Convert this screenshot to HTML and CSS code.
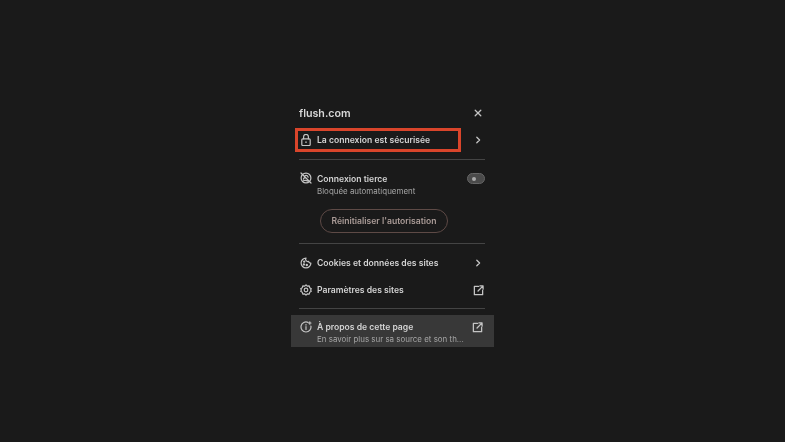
FILE: index.html
```html
<!DOCTYPE html>
<html lang="fr">
<head>
    <meta charset="UTF-8">
    <title>flush.com</title>
    <link rel="stylesheet" href="styles.css">
</head>
<body>
    <div class="panel">
        <div class="head">
            <span class="domain">flush.com</span>
            <svg class="ico-sm" viewBox="0 0 10 10"><path d="M1.5 1.5l7 7M8.500 1.500l-7 7"/></svg>
        </div>

        <div class="secure_row">
            <div class="secure_box">
                <svg class="ico" viewBox="0 0 12 12"><rect x="1.800" y="4.800" width="8.400" height="6.700" rx="1"/><path d="M3.600 4.800V2.800a2.400 2.400 0 0 1 4.800 0v2"/><path d="M5.600 8.100h.8"/></svg>
                <span class="label">La connexion est sécurisée</span>
            </div>
            <svg class="ico-sm" viewBox="0 0 10 10"><path d="M3.500 1.500L7 5 3.500 8.500"/></svg>
        </div>
        <div class="line line1"></div>

        <div class="third">
            <svg class="ico" viewBox="0 0 12 12"><circle cx="6" cy="6" r="4.900"/><path d="M1 1l10 10M3.400 7.200c.5-1.500 1.500-1.600 2.400-1.200M5.200 3.600c1-.3 2.400.1 3 1.600M3.400 8.800c1-.5 3-.4 4.600.4"/></svg>
            <div class="third_text">
                <span class="label">Connexion tierce</span>
                <span class="sub">Bloquée automatiquement</span>
            </div>
            <div class="toggle"><i></i></div>
        </div>
        <div class="reset_wrap"><a class="reset" href="#">Réinitialiser l'autorisation</a></div>
        <div class="line line2"></div>

        <div class="row row_cookies">
            <svg class="ico" viewBox="0 0 12 12"><path d="M6 1.100a4.900 4.900 0 1 0 4.900 4.900 2 2 0 0 1-2.300-1.600A2.200 2.200 0 0 1 6 1.100z"/><circle cx="4.200" cy="4.600" r=".6"/><circle cx="3.900" cy="7.400" r=".6"/><circle cx="6.800" cy="8" r=".6"/></svg>
            <span class="label">Cookies et données des sites</span>
            <svg class="ico-sm" viewBox="0 0 10 10"><path d="M3.500 1.500L7 5 3.500 8.500"/></svg>
        </div>
        <div class="row row_params">
            <svg class="ico" viewBox="0 0 12 12"><path d="M6 .8l1.300 1.400 1.900-.3.5 1.800 1.600 1L10.600 6l.7 1.300-1.600 1-.5 1.800-1.900-.3L6 11.200 4.700 9.800l-1.900.3-.5-1.800-1.600-1L1.400 6 .7 4.700l1.600-1 .5-1.800 1.900.3z"/><circle cx="6" cy="6" r="1.800"/></svg>
            <span class="label">Paramètres des sites</span>
            <svg class="ico-ext" viewBox="0 0 12 12"><path d="M6 1.500H1.500v9h9V6M7.500 1h3.500v3.500M11 1L5.500 6.500"/></svg>
        </div>
        <div class="line line3"></div>

        <div class="about">
            <svg class="ico" viewBox="0 0 12 12"><path d="M8 1.400A5 5 0 1 0 10.900 5"/><path d="M6 5.500v3M6 3.500v.6M9.800 .8v2.400M8.600 2h2.400"/></svg>
            <div class="about_text">
                <span class="label">À propos de cette page</span>
                <span class="sub">En savoir plus sur sa source et son th...</span>
            </div>
            <svg class="ico-ext" viewBox="0 0 12 12"><path d="M6 1.500H1.500v9h9V6M7.500 1h3.500v3.500M11 1L5.500 6.500"/></svg>
        </div>
    </div>
</body>
</html>
```

FILE: styles.css
```css
* { margin: 0; padding: 0; box-sizing: border-box; }

html, body { height: 100%; }

body {
    background-color: #1a1a1a;
    font-family: "Inter", "Liberation Sans", sans-serif;
    color: #d6d6d6;
    display: flex;
    justify-content: center;
    align-items: flex-start;
    padding-top: 103px;
}

svg { fill: none; stroke: #c4c4c4; stroke-linecap: round; stroke-linejoin: round; flex: none; }

.panel { width: 203px; display: flex; flex-direction: column; filter: blur(.45px); }

.ico { width: 12px; height: 12px; stroke-width: 1.200; }
.ico-sm { width: 8px; height: 8px; stroke-width: 1.6; }
.ico-ext { width: 11px; height: 11px; stroke-width: 1.400; }

.label { font-size: 8.600px; font-weight: 600; color: #d4d4d4; white-space: nowrap; }
.sub { font-size: 7.950px; color: #a6a6a6; white-space: nowrap; }

.head {
    height: 20px;
    padding: 0 12px 0 8px;
    display: flex;
    align-items: center;
    justify-content: space-between;
}
.domain { font-size: 10.700px; font-weight: 600; color: #d8d8d8; }

.secure_row {
    margin-top: 5px;
    height: 24px;
    padding: 0 12px 0 4px;
    display: flex;
    align-items: center;
    justify-content: space-between;
}
.secure_box {
    width: 166px;
    height: 24px;
    padding-left: 4px;
    border: 3px solid #d9452b;
    display: flex;
    align-items: center;
    gap: 5px;
}
.secure_box .ico { margin-left: -2px; }

.line { height: 1px; margin: 0 9px 0 8px; background-color: #444; }
.line1 { margin-top: 7px; }
.line2 { margin-top: 10px; }
.line3 { margin-top: 11px; }

.third {
    margin-top: 12px;
    padding: 0 9px;
    display: flex;
    align-items: flex-start;
    gap: 5px;
}
.third_text, .about_text { flex: 1; display: flex; flex-direction: column; gap: 2px; line-height: 10px; }
.third_text { padding-top: 2px; }
.about_text { padding-top: 2px; }
.toggle {
    width: 18px;
    height: 11px;
    margin-top: 1px;
    padding-left: 4px;
    border: 1px solid #666;
    border-radius: 6px;
    background-color: #4a4a4a;
    display: flex;
    align-items: center;
}
.toggle i { width: 4px; height: 4px; border-radius: 50%; background-color: #aaa; }

.reset_wrap { margin-top: 12px; padding-left: 29px; }
.reset {
    display: inline-flex;
    align-items: center;
    justify-content: center;
    width: 128px;
    height: 24px;
    border: 1px solid #5e4a46;
    border-radius: 12px;
    font-size: 8.600px;
    font-weight: 600;
    color: #ab9c98;
    text-decoration: none;
}

.row {
    padding: 0 12px 0 9px;
    display: flex;
    align-items: center;
    gap: 5px;
}
.row .label { flex: 1; }
.row_cookies { margin-top: 12px; height: 14px; }
.row_params { margin-top: 13px; height: 14px; padding-right: 10px; }

.about {
    margin-top: 6px;
    height: 32px;
    padding: 2px 11px 0 9px;
    background-color: #383838;
    display: flex;
    align-items: center;
    gap: 5px;
}
.about > .ico { margin-top: -10px; }
.about > .ico-ext { margin-top: -10px; }
```
